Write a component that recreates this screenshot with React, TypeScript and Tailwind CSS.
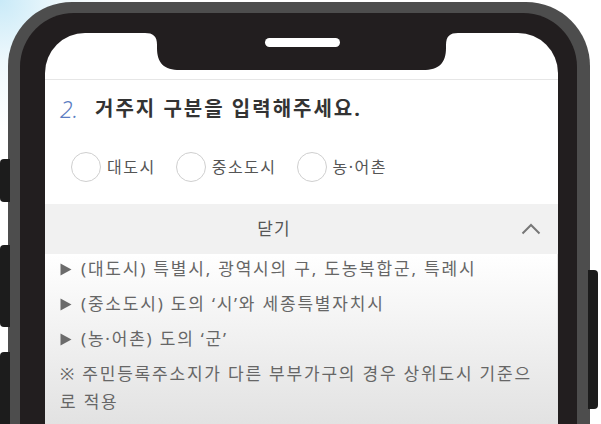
import { useState } from "react";

const options = ["대도시", "중소도시", "농·어촌"];

const rules = [
    "(대도시) 특별시, 광역시의 구, 도농복합군, 특례시",
    "(중소도시) 도의 ‘시’와 세종특별자치시",
    "(농·어촌) 도의 ‘군’",
];

function Triangle() {
    return (
        <svg width="12" height="13" viewBox="0 0 12 13" className="shrink-0">
            <path d="M0.5 0.5 L11.5 6.5 L0.5 12.5 Z" fill="#6b6b6b" />
        </svg>
    );
}

function Notch() {
    return (
        <svg
            width="313"
            height="37"
            viewBox="0 0 313 37"
            className="absolute left-[100px] top-0"
        >
            <path
                d="M0 0 H313 C305 0 301 3 301 12 V15 C301 30 294 37 278 37 H35 C19 37 12 30 12 15 V12 C12 3 8 0 0 0 Z"
                fill="#221e1f"
            />
            <rect x="120" y="5" width="75" height="9" rx="4.5" fill="#ffffff" />
        </svg>
    );
}

export default function App() {
    const [selected, setSelected] = useState<string>("");
    const [open, setOpen] = useState<boolean>(true);

    return (
        <div
            className="relative w-[601px] h-[424px] overflow-hidden bg-[radial-gradient(circle_at_0_0,#c9eaf8_0px,#eef8fc_60px,#ffffff_130px)]"
            style={{ fontFamily: '"Noto Sans", "Noto Sans CJK KR", sans-serif' }}
        >
            {/* side buttons */}
            <div className="absolute left-0 top-[159px] w-[10px] h-[43px] rounded-l-[4px] bg-[#1c1c1c]" />
            <div className="absolute left-0 top-[245px] w-[10px] h-[82px] rounded-l-[4px] bg-[#1c1c1c]" />
            <div className="absolute left-0 top-[352px] w-[10px] h-[90px] rounded-l-[4px] bg-[#1c1c1c]" />
            <div className="absolute left-[588px] top-[270px] w-[10px] h-[139px] rounded-r-[4px] bg-[#1c1c1c]" />

            <div className="ml-[8px] mt-[2px] w-[582px] h-[520px] rounded-[64px] bg-[#4d4d4d] pl-[12px] pr-[13px] pt-[11px]">
                <div className="h-full rounded-[54px] bg-[#221e1f] pl-[25px] pr-[19px] pt-[20px]">
                    <div className="relative h-full rounded-t-[40px] bg-white overflow-hidden flex flex-col">
                        <Notch />
                        <div className="h-[47px] shrink-0 border-b border-[#e6e6e6]" />

                        <div className="flex items-center h-[28px] mt-[15px] pl-[15px]">
                            <span className="text-[23px] italic font-light text-[#5a7cc2] leading-none">2.</span>
                            <span className="ml-[17px] text-[20px] font-bold tracking-[2px] text-[#333333] leading-none">
                                거주지 구분을 입력해주세요.
                            </span>
                        </div>

                        <div className="flex items-center mt-[29px] pl-[26px] h-[30px]">
                            {options.map((opt) => (
                                <button
                                    key={opt}
                                    type="button"
                                    onClick={() => setSelected(opt)}
                                    className="flex items-center mr-[20px] cursor-pointer"
                                >
                                    <span
                                        className={
                                            selected === opt
                                                ? "w-[30px] h-[30px] rounded-full border-[1.5px] border-[#5a7cc2] bg-[#5a7cc2]"
                                                : "w-[30px] h-[30px] rounded-full border-[1.5px] border-[#cfcfcf] bg-white"
                                        }
                                    />
                                    <span className="ml-[6px] text-[16px] tracking-[1.5px] text-[#555555]">{opt}</span>
                                </button>
                            ))}
                        </div>

                        <div className="mt-[22px] flex flex-col">
                            <button
                                type="button"
                                onClick={() => setOpen(!open)}
                                className="flex items-center h-[50px] bg-[#f1f1f1] cursor-pointer"
                            >
                                <span className="flex-1 text-center text-[17px] tracking-[1px] text-[#555555]">닫기</span>
                                <span className="w-[55px] flex justify-center">
                                    <svg width="20" height="12" viewBox="0 0 20 12">
                                        <polyline
                                            points="1.5,10.5 10,2 18.5,10.5"
                                            fill="none"
                                            stroke="#777777"
                                            strokeWidth="2"
                                        />
                                    </svg>
                                </span>
                            </button>

                            {open ? (
                                <div className="h-[170px] bg-gradient-to-b from-white to-[#e2e2e2] px-[15px] pt-[1px] border-r border-[#e4e4e4] text-[17px] tracking-[1.8px] text-[#666666]">
                                    {rules.map((rule) => (
                                        <div key={rule} className="flex items-center h-[28px] mb-[7px] whitespace-nowrap">
                                            <Triangle />
                                            <span className="ml-[9px]">{rule}</span>
                                        </div>
                                    ))}
                                    <p className="leading-[28px] whitespace-nowrap">
                                        ※ 주민등록주소지가 다른 부부가구의 경우 상위도시 기준으
                                        <br />
                                        로 적용
                                    </p>
                                </div>
                            ) : null}
                        </div>
                    </div>
                </div>
            </div>
        </div>
    );
}
